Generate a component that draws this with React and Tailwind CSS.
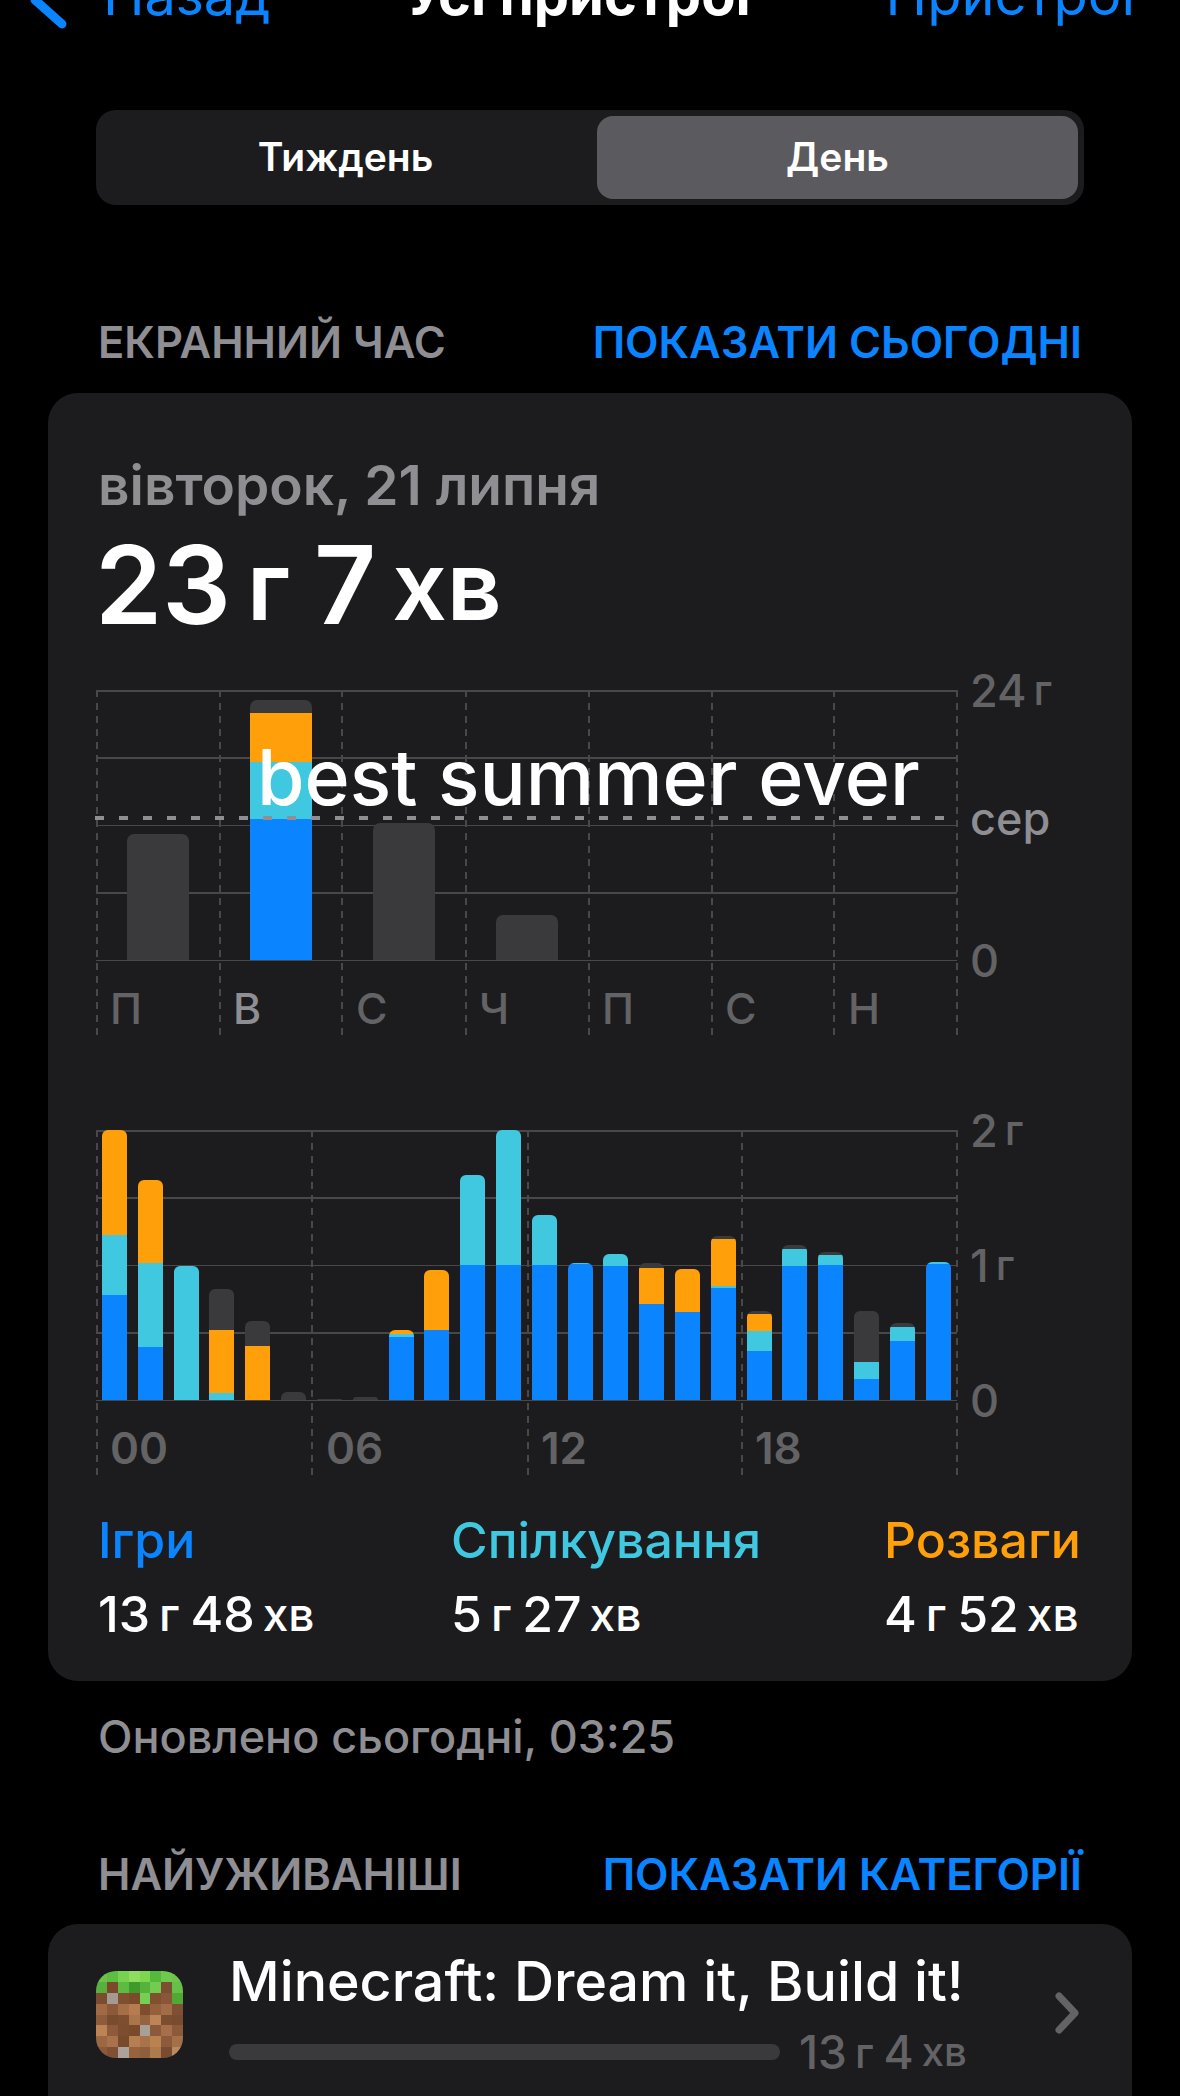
const BLUE = "bg-[#0a84ff]";
const CYAN = "bg-[#40c8e0]";
const ORANGE = "bg-[#ff9f0a]";
const GRAY = "bg-[#3a3a3c]";

// [blue, cyan, orange, gray] in px, bottom to top
const hours = [
  [105, 60, 105, 0], [53, 84, 83, 0], [0, 134, 0, 0], [0, 7, 63, 41],
  [0, 0, 54, 25], [0, 0, 0, 8], [0, 0, 0, 1], [0, 0, 0, 3],
  [63, 3, 4, 0], [70, 0, 60, 0], [135, 90, 0, 0], [135, 135, 0, 0],
  [135, 50, 0, 0], [136, 1, 0, 0], [134, 12, 0, 0], [96, 0, 36, 5],
  [88, 0, 43, 0], [112, 2, 47, 3], [49, 20, 17, 3], [134, 17, 0, 4],
  [135, 10, 0, 3], [21, 17, 0, 51], [59, 14, 0, 4], [136, 2, 0, 0],
];

const week = [
  { day: "П", parts: [0, 0, 0, 126] },
  { day: "В", parts: [141, 57, 49, 13], active: true },
  { day: "С", parts: [0, 0, 0, 137] },
  { day: "Ч", parts: [0, 0, 0, 45] },
  { day: "П", parts: [0, 0, 0, 0] },
  { day: "С", parts: [0, 0, 0, 0] },
  { day: "Н", parts: [0, 0, 0, 0] },
];

const minecraft = [
  ["#6cc349", "#5cbf40", "#77d24f", "#8fdd5f", "#7dd650", "#55b93c", "#6ec94e", "#6cc44d"],
  ["#58b13e", "#7c4a2a", "#5cbb42", "#3f9a2c", "#56b23a", "#72cc52", "#7c4f30", "#66c048"],
  ["#7a4d30", "#a39a92", "#7f4f2f", "#7b4a2b", "#74cf55", "#80502f", "#8a5638", "#4fa934"],
  ["#a06a45", "#8c5a3a", "#a56e47", "#b57c50", "#7d4d2e", "#96603d", "#a36c48", "#7f5033"],
  ["#8f5c3b", "#7a4c2e", "#7d4e30", "#a97549", "#96633f", "#bd8557", "#7c4e30", "#7a4c2f"],
  ["#bd8354", "#8d5b3c", "#7d4d2f", "#7a4a2b", "#a8a098", "#8c5a3a", "#a56f4b", "#8b5a3b"],
  ["#9c6844", "#a8724d", "#784a2c", "#b57f52", "#a87349", "#b9824f", "#8d5a3b", "#a47047"],
  ["#8a5a3a", "#7f5033", "#aaa29b", "#97633f", "#8f5e3c", "#ad7a4c", "#7a4c2f", "#b98a5f"],
];

const dashes =
  "bg-[repeating-linear-gradient(to_bottom,#48484a_0,#48484a_7px,transparent_7px,transparent_13px)]";

function Stack({ parts, className }) {
  const [blue, cyan, orange, gray] = parts;
  return (
    <div className={`flex flex-col overflow-hidden ${className}`}>
      <div className={GRAY} style={{ height: gray }} />
      <div className={ORANGE} style={{ height: orange }} />
      <div className={CYAN} style={{ height: cyan }} />
      <div className={BLUE} style={{ height: blue }} />
    </div>
  );
}

function ChartGrid({ verticals }) {
  return (
    <>
      <div className="absolute inset-x-0 top-0 flex h-[271px] flex-col justify-between">
        {[0, 1, 2, 3, 4].map((i) => (
          <div key={i} className="h-[1.5px] bg-[#48484a]" />
        ))}
      </div>
      {verticals.map((x) => (
        <div
          key={x}
          className={`absolute top-0 h-[347px] w-[1.5px] ${dashes}`}
          style={{ left: x }}
        />
      ))}
    </>
  );
}

function AxisLabel({ top, unit, className = "text-[#636366]", children }) {
  return (
    <div
      className={`absolute left-[874px] flex h-[50px] items-center whitespace-nowrap text-[45px] font-medium leading-none ${className}`}
      style={{ top: top - 25 }}
    >
      {children}
      {unit && <span className="ml-[7px] text-[42px]">{unit}</span>}
    </div>
  );
}

function WeekChart() {
  return (
    <div className="relative mt-[55px] ml-[48px] h-[347px] w-[861px]">
      <ChartGrid verticals={[0, 123, 245, 369, 492, 615, 737, 860]} />
      <div className="absolute inset-x-0 top-0 grid h-[270px] grid-cols-7 items-end">
        {week.map((d, i) => (
          <div key={i} className="pl-[31px]">
            <Stack parts={d.parts} className="w-[62px] rounded-t-[7px]" />
          </div>
        ))}
      </div>
      <div className="absolute inset-x-0 top-[293px] grid grid-cols-7">
        {week.map((d, i) => (
          <div
            key={i}
            className={`h-[50px] pl-[14px] text-[43px] font-medium leading-[50px] ${
              d.active ? "text-[#8e8e93]" : "text-[#636366]"
            }`}
          >
            {d.day}
          </div>
        ))}
      </div>
      <div className="absolute -left-px right-[6px] top-[126px] h-[4px] bg-[repeating-linear-gradient(to_right,#8e8e93_0,#8e8e93_9px,transparent_9px,transparent_24px)]" />
      <div className="absolute left-[161px] top-[42px] whitespace-nowrap text-[77px] font-medium leading-[90px] text-white">
        best summer ever
      </div>
      <AxisLabel top={0} unit="г">24</AxisLabel>
      <AxisLabel top={128} className="text-[#8e8e93]">сер</AxisLabel>
      <AxisLabel top={270}>0</AxisLabel>
    </div>
  );
}

function DayChart() {
  return (
    <div className="relative mt-[93px] ml-[48px] h-[348px] w-[861px]">
      <ChartGrid verticals={[0, 215, 431, 645, 860]} />
      <div className="absolute inset-x-[6px] top-0 flex h-[270px] items-end justify-between">
        {hours.map((parts, i) => (
          <Stack key={i} parts={parts} className="w-[25px] rounded-t-[6px]" />
        ))}
      </div>
      <div className="absolute left-[14px] top-[293px] h-[50px] text-[44px] font-semibold leading-[50px] text-[#636366]">00</div>
      <div className="absolute left-[230px] top-[293px] h-[50px] text-[44px] font-semibold leading-[50px] text-[#636366]">06</div>
      <div className="absolute left-[445px] top-[293px] h-[50px] text-[44px] font-semibold leading-[50px] text-[#636366]">12</div>
      <div className="absolute left-[659px] top-[293px] h-[50px] text-[44px] font-semibold leading-[50px] text-[#636366]">18</div>
      <AxisLabel top={0} unit="г">2</AxisLabel>
      <AxisLabel top={135} unit="г">1</AxisLabel>
      <AxisLabel top={270}>0</AxisLabel>
    </div>
  );
}

function Total({ h, m }) {
  return (
    <div className="mt-[19px] flex h-[50px] items-center whitespace-nowrap text-[50px] font-medium text-white">
      {h}
      <span className="ml-[9px] text-[46px]">г</span>
      <span className="ml-[11px]">{m}</span>
      <span className="ml-[8px] text-[46px]">хв</span>
    </div>
  );
}

function SectionHeader({ title, action, className }) {
  return (
    <div className={`flex h-[50px] items-center justify-between px-[98px] text-[43.5px] font-semibold ${className}`}>
      <span className="text-[#8e8e93]">{title}</span>
      <span className="text-[#0a84ff]">{action}</span>
    </div>
  );
}

export default function App() {
  return (
    <div className="h-[2096px] overflow-hidden bg-black font-['Inter',sans-serif]">
      <div className="-mt-[35px] flex h-[60px] items-center justify-between pl-[28px] pr-[45px] text-[56px] text-[#0a84ff]">
        <div className="flex items-center">
          <svg width="44" height="60" viewBox="0 0 44 60" fill="none" className="overflow-visible">
            <path d="M34 59 L7 35 L34 11" stroke="#0a84ff" strokeWidth="9" strokeLinecap="round" strokeLinejoin="round" />
          </svg>
          <span className="ml-[31px]">Назад</span>
        </div>
        <span className="font-bold text-white">Усі пристрої</span>
        <span>Пристрої</span>
      </div>

      <div className="mx-[96px] mt-[85px] flex h-[95px] justify-end rounded-[20px] bg-[#1c1c1e] p-[6px] text-[39px] font-semibold text-white">
        <div className="flex flex-1 items-center justify-center pr-[8px]">Тиждень</div>
        <div className="flex w-[481px] items-center justify-center rounded-[16px] bg-[#5b5b5f]">День</div>
      </div>

      <SectionHeader title="ЕКРАННИЙ ЧАС" action="ПОКАЗАТИ СЬОГОДНІ" className="mt-[113px]" />

      <div className="mx-[48px] mt-[25px] rounded-[30px] bg-[#1c1c1e] pb-[42px] pt-[62px]">
        <div className="flex h-[60px] items-center pl-[50px] text-[55px] font-semibold text-[#8e8e93]">
          вівторок, 21 липня
        </div>
        <div className="mt-[20px] flex h-[100px] items-center whitespace-nowrap pl-[47px] text-[108px] font-semibold text-white">
          23<span className="ml-[16px] text-[96px]">г</span>
          <span className="ml-[24px]">7</span>
          <span className="ml-[16px] text-[96px]">хв</span>
        </div>

        <WeekChart />
        <DayChart />

        <div className="mt-[32px] flex px-[50px]">
          <div className="w-[353px]">
            <div className="flex h-[60px] items-center text-[50px] font-medium text-[#0a84ff]">Ігри</div>
            <Total h="13" m="48" />
          </div>
          <div className="w-[433px]">
            <div className="flex h-[60px] items-center text-[50px] font-medium text-[#40c8e0]">Спілкування</div>
            <Total h="5" m="27" />
          </div>
          <div>
            <div className="flex h-[60px] items-center text-[50px] font-medium text-[#ff9f0a]">Розваги</div>
            <Total h="4" m="52" />
          </div>
        </div>
      </div>

      <div className="mt-[31px] flex h-[50px] items-center pl-[98px] text-[45px] font-medium text-[#8e8e93]">
        Оновлено сьогодні, 03:25
      </div>

      <SectionHeader title="НАЙУЖИВАНІШІ" action="ПОКАЗАТИ КАТЕГОРІЇ" className="mt-[88px]" />

      <div className="mx-[48px] mt-[24px] flex h-[400px] rounded-t-[30px] bg-[#1c1c1e] pl-[48px] pt-[27px]">
        <svg viewBox="0 0 8 8" className="mt-[20px] h-[87px] w-[87px] shrink-0 rounded-[20px]" shapeRendering="crispEdges">
          {minecraft.map((row, y) =>
            row.map((fill, x) => <rect key={`${x}-${y}`} x={x} y={y} width="1" height="1" fill={fill} />)
          )}
        </svg>
        <div className="ml-[46px] w-[745px]">
          <div className="flex h-[60px] items-center whitespace-nowrap text-[55.5px] font-medium text-white">
            Minecraft: Dream it, Build it!
          </div>
          <div className="mt-[16px] flex h-[50px] items-center">
            <div className="h-[16px] w-[551px] rounded-full bg-[#3a3a3c]" />
            <div className="ml-[19px] flex items-center whitespace-nowrap text-[46px] font-medium text-[#636366]">
              13<span className="ml-[8px] text-[42px]">г</span>
              <span className="ml-[10px]">4</span>
              <span className="ml-[8px] text-[40px]">хв</span>
            </div>
          </div>
        </div>
        <svg width="25" height="42" viewBox="0 0 25 42" fill="none" className="ml-[81px] mt-[41px]">
          <path d="M4 4 L20 21 L4 38" stroke="#636366" strokeWidth="7" strokeLinecap="round" strokeLinejoin="round" />
        </svg>
      </div>
    </div>
  );
}
